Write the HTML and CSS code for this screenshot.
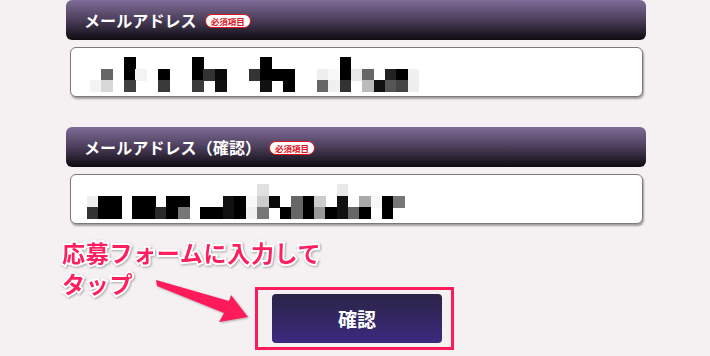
FILE: index.html
```html
<!DOCTYPE html>
<html lang="ja">
<head>
  <meta charset="UTF-8">
  <title>応募フォーム - メールアドレス</title>
  <link rel="stylesheet" href="styles.css">
</head>
<body>
  <main class="form">
    <section class="field">
      <div class="field-head">
        <span class="field-title">メールアドレス</span>
        <span class="badge">必須項目</span>
      </div>
      <div class="field-input">
        <svg class="mosaic mosaic-shift" viewBox="0 0 29 3" preserveAspectRatio="none" shape-rendering="crispEdges">
          <rect x="3" y="0" width="1.05" height="1.05" fill="#000"/>
          <rect x="9" y="0" width="1.05" height="1.05" fill="#000"/>
          <rect x="15" y="0" width="1.05" height="1.05" fill="#000"/>
          <rect x="22" y="0" width="1.05" height="1.05" fill="#000"/>

          <rect x="1" y="1" width="1.05" height="1.05" fill="#666"/>
          <rect x="3" y="1" width="1.05" height="1.05" fill="#000"/>
          <rect x="4" y="1" width="1.05" height="1.05" fill="#f4f4f4"/>
          <rect x="6" y="1" width="1.05" height="1.05" fill="#000"/>
          <rect x="9" y="1" width="1.05" height="1.05" fill="#000"/>
          <rect x="10" y="1" width="1.05" height="1.05" fill="#333"/>
          <rect x="11" y="1" width="1.05" height="1.05" fill="#0a0a0a"/>
          <rect x="14" y="1" width="1.05" height="1.05" fill="#333"/>
          <rect x="15" y="1" width="1.05" height="1.05" fill="#000"/>
          <rect x="16" y="1" width="1.05" height="1.05" fill="#000"/>
          <rect x="17" y="1" width="1.05" height="1.05" fill="#000"/>
          <rect x="20" y="1" width="1.05" height="1.05" fill="#eee"/>
          <rect x="21" y="1" width="1.05" height="1.05" fill="#f8f8f8"/>
          <rect x="22" y="1" width="1.05" height="1.05" fill="#000"/>
          <rect x="23" y="1" width="1.05" height="1.05" fill="#e8e8e8"/>
          <rect x="24" y="1" width="1.05" height="1.05" fill="#666"/>
          <rect x="26" y="1" width="1.05" height="1.05" fill="#222"/>
          <rect x="27" y="1" width="1.05" height="1.05" fill="#000"/>
          <rect x="28" y="1" width="1" height="1.05" fill="#f0f0f0"/>

          <rect x="0" y="2" width="1.05" height="1" fill="#f4f4f4"/>
          <rect x="1" y="2" width="1.05" height="1" fill="#d8d8d8"/>
          <rect x="3" y="2" width="1.05" height="1" fill="#404040"/>
          <rect x="6" y="2" width="1.05" height="1" fill="#3a3a3a"/>
          <rect x="9" y="2" width="1.05" height="1" fill="#3a3a3a"/>
          <rect x="11" y="2" width="1.05" height="1" fill="#111"/>
          <rect x="15" y="2" width="1.05" height="1" fill="#111"/>
          <rect x="17" y="2" width="1.05" height="1" fill="#000"/>
          <rect x="20" y="2" width="1.05" height="1" fill="#666"/>
          <rect x="21" y="2" width="1.05" height="1" fill="#f0f0f0"/>
          <rect x="22" y="2" width="1.05" height="1" fill="#333"/>
          <rect x="24" y="2" width="1.05" height="1" fill="#bbb"/>
          <rect x="25" y="2" width="1.05" height="1" fill="#111"/>
          <rect x="26" y="2" width="1.05" height="1" fill="#555"/>
          <rect x="27" y="2" width="1.05" height="1" fill="#444"/>
          <rect x="28" y="2" width="1" height="1" fill="#eee"/>
        </svg>
      </div>
    </section>

    <section class="field">
      <div class="field-head">
        <span class="field-title">メールアドレス（確認）</span>
        <span class="badge">必須項目</span>
      </div>
      <div class="field-input">
        <svg class="mosaic" viewBox="0 0 29 3" preserveAspectRatio="none" shape-rendering="crispEdges">
          <rect x="15" y="0" width="1.05" height="1.05" fill="#e0e0e0"/>
          <rect x="22" y="0" width="1.05" height="1.05" fill="#e8e8e8"/>

          <rect x="0" y="1" width="1.05" height="1.05" fill="#eee"/>
          <rect x="1" y="1" width="1.05" height="1.05" fill="#000"/>
          <rect x="2" y="1" width="1.05" height="1.05" fill="#000"/>
          <rect x="4" y="1" width="1.05" height="1.05" fill="#000"/>
          <rect x="5" y="1" width="1.05" height="1.05" fill="#000"/>
          <rect x="7" y="1" width="1.05" height="1.05" fill="#000"/>
          <rect x="8" y="1" width="1.05" height="1.05" fill="#000"/>
          <rect x="12" y="1" width="1.05" height="1.05" fill="#111"/>
          <rect x="13" y="1" width="1.05" height="1.05" fill="#000"/>
          <rect x="14" y="1" width="1.05" height="1.05" fill="#f8f8f8"/>
          <rect x="15" y="1" width="1.05" height="1.05" fill="#ccc"/>
          <rect x="16" y="1" width="1.05" height="1.05" fill="#0a0a0a"/>
          <rect x="18" y="1" width="1.05" height="1.05" fill="#666"/>
          <rect x="19" y="1" width="1.05" height="1.05" fill="#000"/>
          <rect x="20" y="1" width="1.05" height="1.05" fill="#ccc"/>
          <rect x="22" y="1" width="1.05" height="1.05" fill="#111"/>
          <rect x="24" y="1" width="1.05" height="1.05" fill="#aaa"/>
          <rect x="25" y="1" width="1.05" height="1.05" fill="#f8f8f8"/>
          <rect x="26" y="1" width="1.05" height="1.05" fill="#000"/>
          <rect x="27" y="1" width="1" height="1.05" fill="#777"/>

          <rect x="0" y="2" width="1.05" height="1" fill="#333"/>
          <rect x="1" y="2" width="1.05" height="1" fill="#000"/>
          <rect x="2" y="2" width="1.05" height="1" fill="#000"/>
          <rect x="4" y="2" width="1.05" height="1" fill="#000"/>
          <rect x="5" y="2" width="1.05" height="1" fill="#000"/>
          <rect x="6" y="2" width="1.05" height="1" fill="#2a2a2a"/>
          <rect x="7" y="2" width="1.05" height="1" fill="#000"/>
          <rect x="8" y="2" width="1.05" height="1" fill="#777"/>
          <rect x="10" y="2" width="1.05" height="1" fill="#000"/>
          <rect x="11" y="2" width="1.05" height="1" fill="#000"/>
          <rect x="12" y="2" width="1.05" height="1" fill="#111"/>
          <rect x="13" y="2" width="1.05" height="1" fill="#000"/>
          <rect x="14" y="2" width="1.05" height="1" fill="#f0f0f0"/>
          <rect x="15" y="2" width="1.05" height="1" fill="#777"/>
          <rect x="17" y="2" width="1.05" height="1" fill="#000"/>
          <rect x="18" y="2" width="1.05" height="1" fill="#666"/>
          <rect x="19" y="2" width="1.05" height="1" fill="#000"/>
          <rect x="20" y="2" width="1.05" height="1" fill="#999"/>
          <rect x="21" y="2" width="1.05" height="1" fill="#000"/>
          <rect x="22" y="2" width="1.05" height="1" fill="#111"/>
          <rect x="23" y="2" width="1.05" height="1" fill="#666"/>
          <rect x="24" y="2" width="1.05" height="1" fill="#000"/>
          <rect x="26" y="2" width="1" height="1" fill="#000"/>
        </svg>
      </div>
    </section>

    <div class="submit-area">
      <button type="button" class="submit-button">確認</button>

      <!-- tutorial annotations laid over the form -->
      <div class="note">応募フォームに入力して<br>タップ</div>
      <svg class="note-arrow" width="100" height="50" viewBox="150 276 100 50">
        <polygon points="156,280 229,301 231,295 248,317 219,322 224,313 157,286" fill="#ff1a5b"/>
      </svg>
      <div class="note-frame"></div>
    </div>
  </main>
</body>
</html>
```

FILE: styles.css
```css
html, body { margin: 0; padding: 0; }
body {
  background: #f5f1f2;
  font-family: "Noto Sans CJK JP", "Noto Sans", sans-serif;
  width: 710px; height: 356px; overflow: hidden;
}

.form { width: 580px; margin: 0 0 0 66px; }

.field { margin-bottom: 30px; }
.field:last-of-type { margin-bottom: 0; }

.field-head {
  height: 40px; box-sizing: border-box;
  display: flex; align-items: center; gap: 8px;
  padding-left: 18px;
  border-radius: 6px;
  background: linear-gradient(to bottom, #7f6c98 0%, #4b3e5a 50%, #0e0b11 100%);
}
.field-title { color: #fff; font-size: 16px; font-weight: 700; letter-spacing: 0.1px; }
.badge {
  display: inline-block; height: 14px; line-height: 12px; box-sizing: border-box;
  padding: 0 5px; border: 1.5px solid #e0101c; border-radius: 7px;
  background: #fff; color: #e0101c; font-size: 8.5px; font-weight: 700;
  margin-top: 2px;
}

.field-input {
  margin: 7px 3px 0 4px; height: 50px; box-sizing: border-box;
  background: #fff; border: 1px solid #7a7a7a; border-radius: 6px;
  box-shadow: 1px 2px 2px rgba(0,0,0,0.35);
  padding: 9px 0 0 16px;
}
.mosaic { display: block; width: 329px; height: 35px; }
.mosaic-shift { margin-left: 3px; }

.submit-area { position: relative; height: 132px; padding-top: 70px; box-sizing: border-box; }
.submit-button {
  display: block; margin: 0 auto 0 206px;
  width: 170px; height: 49px; border: none; border-radius: 4px;
  background: linear-gradient(to bottom, #2a2446, #3b2a80);
  color: #fff; font-family: inherit; font-size: 19px; font-weight: 700;
}

.note {
  position: absolute; left: -4px; top: 13px;
  color: #ff1f5e; font-size: 23px; font-weight: 700; line-height: 31px;
  letter-spacing: 0.7px;
  -webkit-text-stroke: 4px #fff; paint-order: stroke fill;
  filter: drop-shadow(1px 1px 1px rgba(0,0,0,0.3));
}
.note-arrow {
  position: absolute; left: 84px; top: 52px;
  filter: drop-shadow(1px 1px 1px rgba(0,0,0,0.3));
}
.note-frame {
  position: absolute; left: 189px; top: 63px;
  width: 199px; height: 63px; box-sizing: border-box;
  border: 3px solid #ff1a5b;
}
```
